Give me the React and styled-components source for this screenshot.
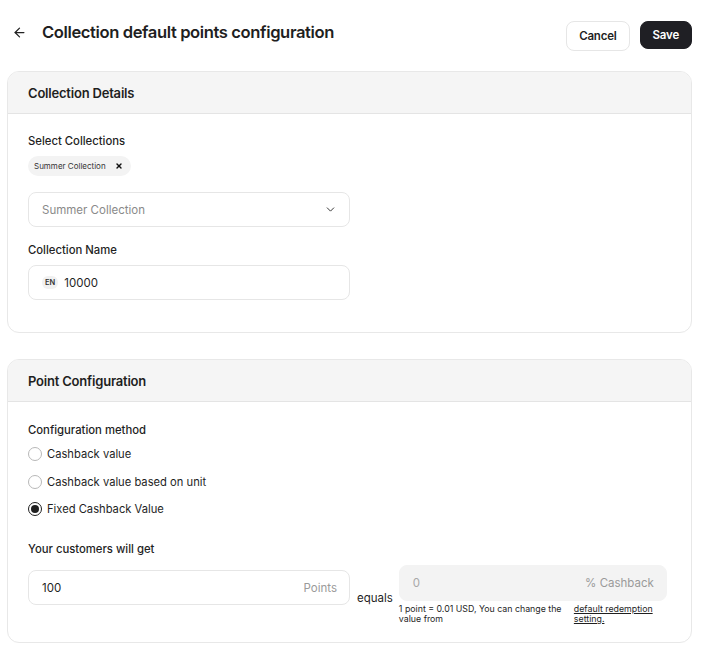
import React, { useState } from 'react';
import styled, { createGlobalStyle } from 'styled-components';

const GlobalStyle = createGlobalStyle`
  * { box-sizing: border-box; }
  body {
    margin: 0;
    background: #ffffff;
    font-family: Inter, 'Noto Sans', sans-serif;
    color: #1f1f1f;
  }
`;

const Page = styled.div`
  width: 709px;
  padding: 0 17px 0 7px;
`;

const TopBar = styled.div`
  display: flex;
  align-items: flex-start;
  justify-content: space-between;
  padding-top: 21px;
  height: 71px;
`;

const TitleRow = styled.div`
  display: flex;
  align-items: center;
  gap: 15px;
  padding-left: 5px;
  height: 22px;
`;

const BackButton = styled.button`
  background: none;
  border: 0;
  padding: 0;
  display: flex;
  color: #222;
  cursor: pointer;
`;

const Title = styled.h1`
  margin: 0;
  font-size: 16.6px;
  font-weight: 600;
  letter-spacing: -0.4px;
  color: #1f1f1f;
`;

const Actions = styled.div`
  display: flex;
  gap: 10px;
`;

const Button = styled.button`
  height: ${p => (p.$primary ? '28px' : '30px')};
  padding: 0 12px;
  border-radius: 8px;
  font-family: inherit;
  font-size: 11.5px;
  font-weight: 600;
  letter-spacing: -0.2px;
  border: 1px solid ${p => (p.$primary ? '#1f1f24' : '#e6e6e6')};
  background: ${p => (p.$primary ? '#1f1f24' : '#fff')};
  color: ${p => (p.$primary ? '#fff' : '#1f1f1f')};
`;

const Card = styled.section`
  border: 1px solid #e8e8e8;
  border-radius: 12px;
  overflow: hidden;
  margin-bottom: 26px;
`;

const CardHeader = styled.div`
  height: 42px;
  background: #f5f5f5;
  border-bottom: 1px solid #e4e4e4;
  display: flex;
  align-items: center;
  padding-left: 20px;
  font-size: 13px;
  font-weight: 600;
  letter-spacing: -0.2px;
`;

const CardBody = styled.div`
  padding: ${p => p.$pad || '20px 20px 30px'};
`;

const Label = styled.div`
  font-size: 11.3px;
  font-weight: 500;
  color: #1f1f1f;
  line-height: 14px;
  margin-top: ${p => p.$mt || '0'};
  margin-bottom: ${p => p.$mb || '8px'};
`;

const Chip = styled.div`
  display: flex;
  width: fit-content;
  align-items: center;
  gap: 9px;
  height: 20px;
  padding: 0 8px 0 6px;
  border-radius: 10px;
  background: #f3f3f3;
  font-size: 8px;
  color: #333;
  margin-bottom: 16px;
`;

const Field = styled.div`
  width: ${p => p.$w || '322px'};
  height: ${p => p.$h || '35px'};
  border: 1px solid ${p => (p.$filled ? '#f3f3f3' : '#e6e6e6')};
  background: ${p => (p.$filled ? '#f3f3f3' : '#fff')};
  border-radius: 8px;
  display: flex;
  align-items: center;
  gap: 6px;
  padding: 0 12px 0 13px;
  font-size: 11.5px;
  color: ${p => (p.$muted ? '#8a8a8a' : '#1f1f1f')};
  margin-bottom: ${p => p.$mb || '0'};
`;

const Value = styled.span`
  flex: 1;
  color: ${p => p.$color || 'inherit'};
`;

const Suffix = styled.span`
  color: #9a9a9a;
`;

const LangBadge = styled.span`
  font-size: 7.5px;
  font-weight: 600;
  background: #f1f1f1;
  border-radius: 6px;
  padding: 2px 3px;
  color: #333;
`;

const RadioRow = styled.label`
  display: flex;
  align-items: center;
  gap: 5px;
  height: 14px;
  font-size: 11.2px;
  color: #1f1f1f;
  margin-bottom: 13.5px;
  cursor: pointer;
`;

const RadioDot = styled.span`
  width: 14px;
  height: 14px;
  border-radius: 50%;
  border: 1px solid ${p => (p.$on ? '#1f1f1f' : '#b8b8b8')};
  display: flex;
  align-items: center;
  justify-content: center;
  &::after {
    content: '';
    width: 8px;
    height: 8px;
    border-radius: 50%;
    background: ${p => (p.$on ? '#1f1f1f' : 'transparent')};
  }
`;

const PointsRow = styled.div`
  display: flex;
  align-items: flex-start;
`;

const Equals = styled.div`
  font-size: 11.5px;
  padding: 21px 6px 0 7px;
`;

const CashbackCol = styled.div`
  width: 268px;
  margin-top: -5px;
`;

const Help = styled.div`
  display: grid;
  grid-template-columns: 165px 1fr;
  column-gap: 10px;
  font-size: 8.8px;
  line-height: 10px;
  color: #1f1f1f;
  margin-top: 3px;
`;

const HelpLink = styled.a`
  color: #1f1f1f;
  text-decoration: underline;
`;

function Chevron() {
  return (
    <svg width="13" height="13" viewBox="0 0 24 24" fill="none" stroke="#333" strokeWidth="1.8" strokeLinecap="round" strokeLinejoin="round">
      <path d="m6 9 6 6 6-6" />
    </svg>
  );
}

const options = ['Cashback value', 'Cashback value based on unit', 'Fixed Cashback Value'];

export default function App() {
  const [method, setMethod] = useState(2);

  return (
    <Page>
      <GlobalStyle />
      <TopBar>
        <TitleRow>
          <BackButton aria-label="Back">
            <svg width="15" height="15" viewBox="0 0 24 24" fill="none" stroke="currentColor" strokeWidth="2" strokeLinecap="round" strokeLinejoin="round">
              <path d="M19 12H5" />
              <path d="m12 19-7-7 7-7" />
            </svg>
          </BackButton>
          <Title>Collection default points configuration</Title>
        </TitleRow>
        <Actions>
          <Button>Cancel</Button>
          <Button $primary>Save</Button>
        </Actions>
      </TopBar>

      <Card>
        <CardHeader>Collection Details</CardHeader>
        <CardBody $pad="20px 20px 32px">
          <Label>Select Collections</Label>
          <Chip>
            Summer Collection
            <svg width="8" height="8" viewBox="0 0 24 24" fill="none" stroke="#111" strokeWidth="4" strokeLinecap="round">
              <path d="M18 6 6 18" />
              <path d="m6 6 12 12" />
            </svg>
          </Chip>
          <Field $muted $mb="16px">
            <Value>Summer Collection</Value>
            <Chevron />
          </Field>
          <Label>Collection Name</Label>
          <Field>
            <LangBadge>EN</LangBadge>
            <span>10000</span>
          </Field>
        </CardBody>
      </Card>

      <Card>
        <CardHeader>Point Configuration</CardHeader>
        <CardBody $pad="21px 20px 18px">
          <Label $mb="10px">Configuration method</Label>
          {options.map((o, i) => (
            <RadioRow key={o} onClick={() => setMethod(i)}>
              <RadioDot $on={method === i} />
              {o}
            </RadioRow>
          ))}
          <Label $mt="26px" $mb="14px">Your customers will get</Label>
          <PointsRow>
            <Field>
              <Value>100</Value>
              <Suffix>Points</Suffix>
            </Field>
            <Equals>equals</Equals>
            <CashbackCol>
              <Field $filled $h="36px" $w="100%">
                <Value $color="#a8a8a8">0</Value>
                <Suffix>% Cashback</Suffix>
              </Field>
              <Help>
                <span>1 point = 0.01 USD, You can change the value from</span>
                <HelpLink href="#">default redemption setting.</HelpLink>
              </Help>
            </CashbackCol>
          </PointsRow>
        </CardBody>
      </Card>
    </Page>
  );
}
